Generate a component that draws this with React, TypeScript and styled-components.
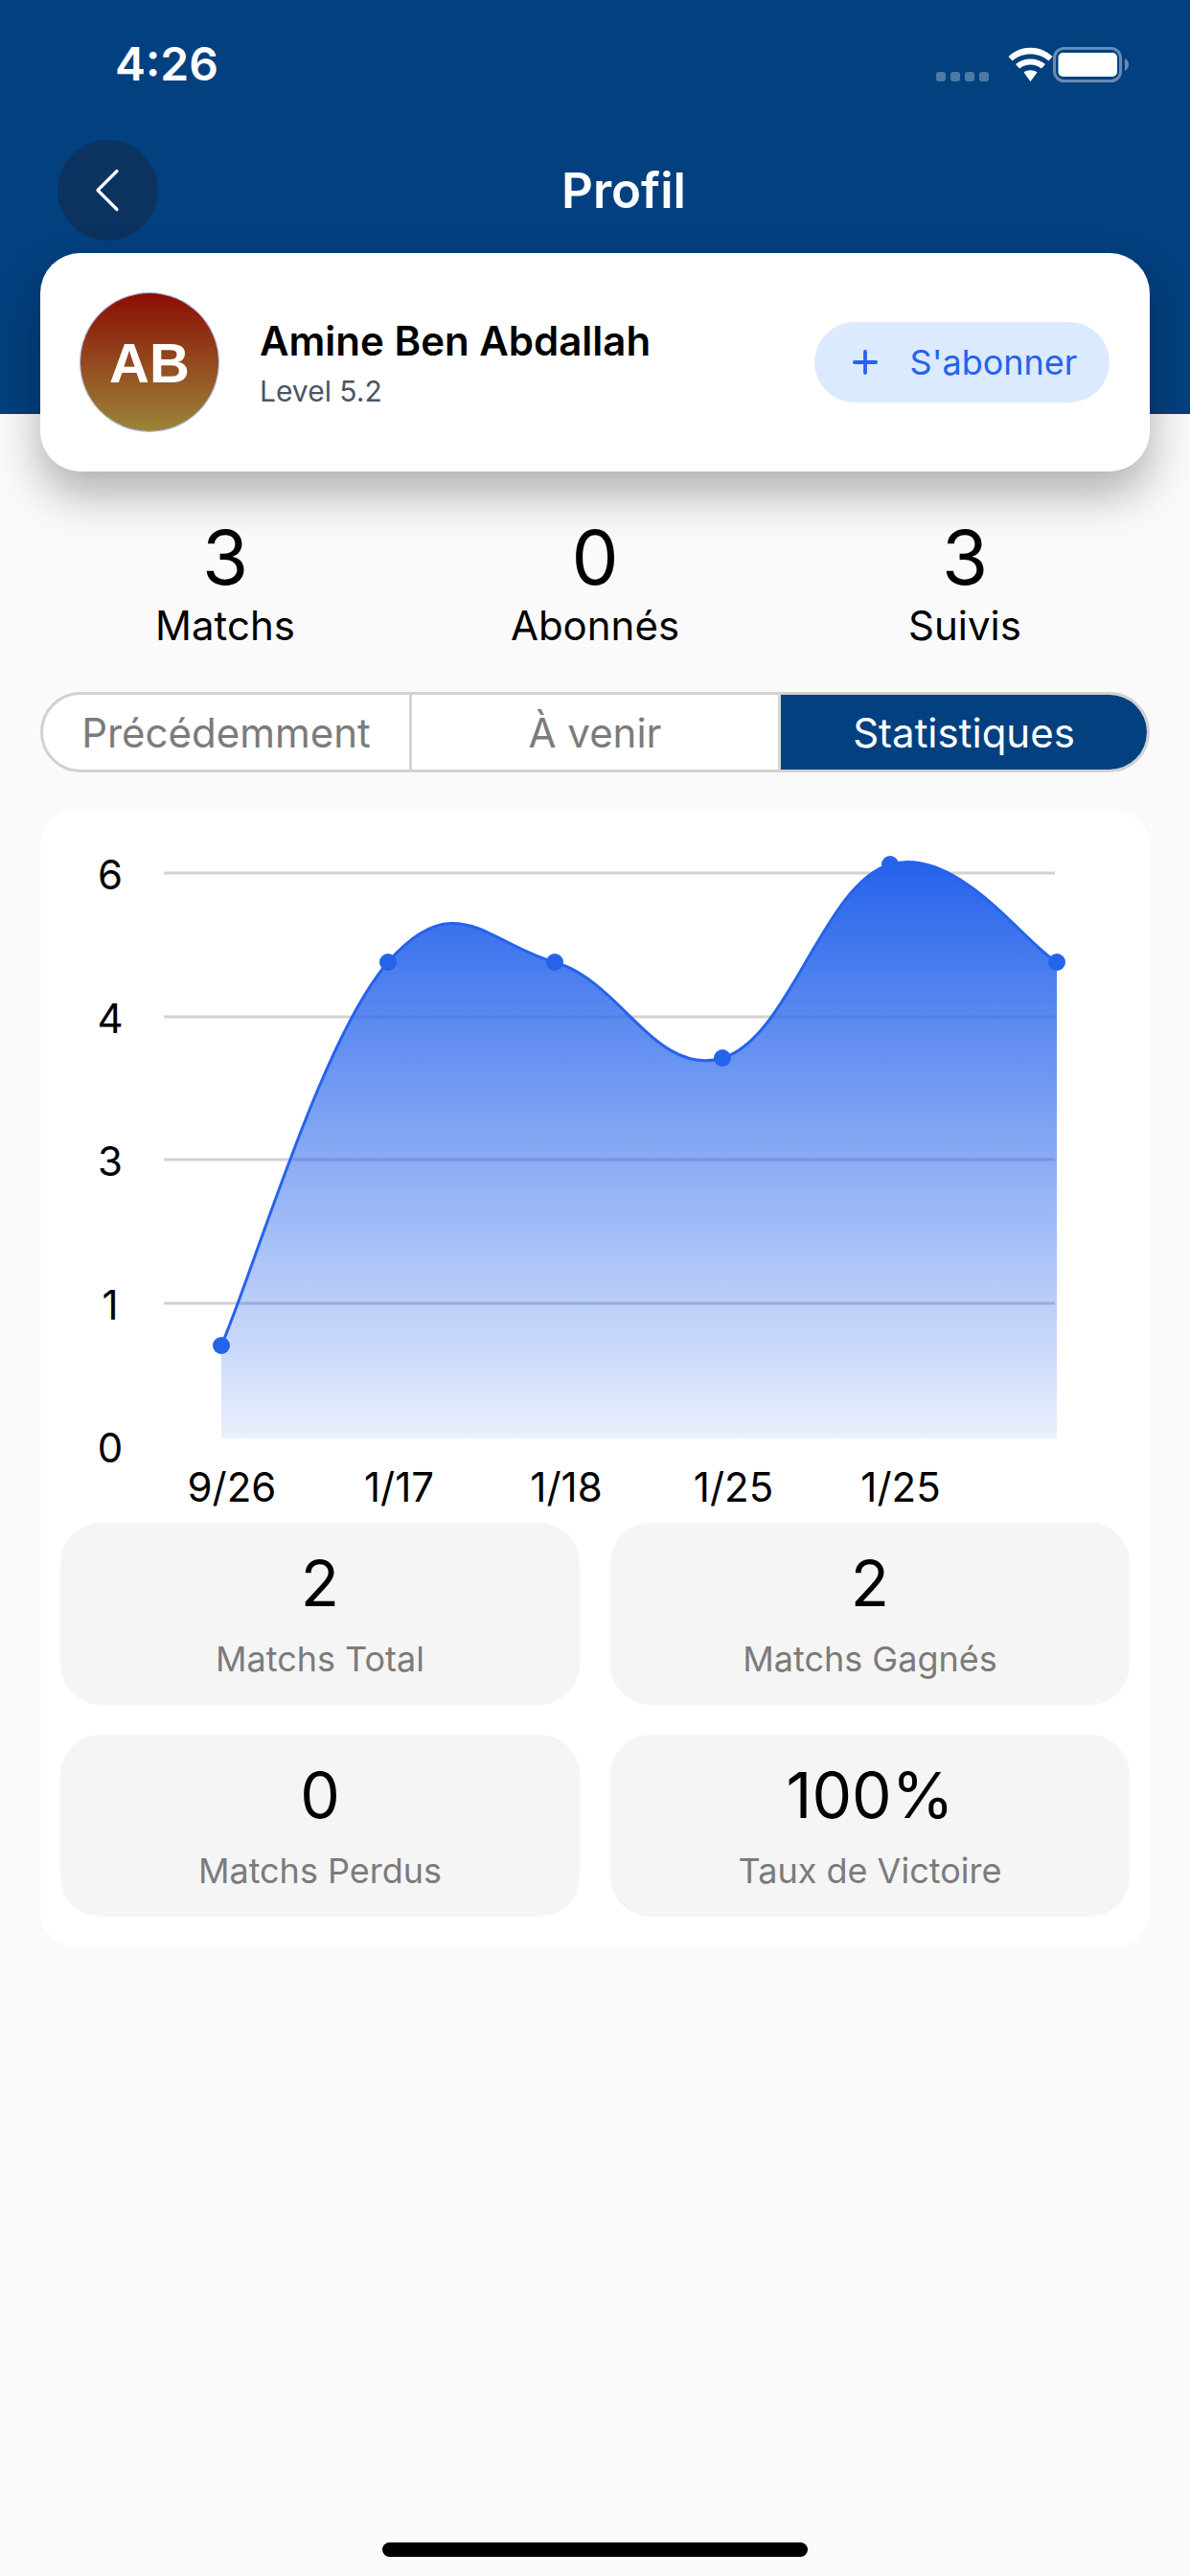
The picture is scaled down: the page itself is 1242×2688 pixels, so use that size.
import styled, { createGlobalStyle } from "styled-components";
import { Plus } from "lucide-react";

const NAVY = "#03407f";
const BLUE = "#2563eb";

const GlobalStyle = createGlobalStyle`
  html, body {
    margin: 0;
    padding: 0;
    background: #fafafa;
    font-family: Inter, "Liberation Sans", sans-serif;
  }
  * {
    box-sizing: border-box;
  }
`;

const followers = [
  { value: "3", label: "Matchs" },
  { value: "0", label: "Abonnés" },
  { value: "3", label: "Suivis" },
];

const tabs = ["Précédemment", "À venir", "Statistiques"];

const summary = [
  { value: "2", label: "Matchs Total" },
  { value: "2", label: "Matchs Gagnés" },
  { value: "0", label: "Matchs Perdus" },
  { value: "100%", label: "Taux de Victoire" },
];

// chart coordinates, relative to the white card
const CHART_W = 1158;
const CHART_H = 743;
const points = [
  [189, 558],
  [363, 158],
  [537, 158],
  [712, 258],
  [887, 56],
  [1061, 158],
];
const gridLines = [
  { y: 65, label: "6" },
  { y: 215, label: "4" },
  { y: 364, label: "3" },
  { y: 514, label: "1" },
];
const xLabels = ["9/26", "1/17", "1/18", "1/25", "1/25"];
const AREA_BOTTOM = 655;

function curvePath(pts: number[][], smoothing = 0.2) {
  let d = `M${pts[0][0]} ${pts[0][1]}`;
  for (let i = 0; i < pts.length - 1; i++) {
    const prev = pts[i - 1] ?? pts[i];
    const cur = pts[i];
    const next = pts[i + 1];
    const after = pts[i + 2] ?? next;
    const c1x = cur[0] + (next[0] - prev[0]) * smoothing;
    const c1y = cur[1] + (next[1] - prev[1]) * smoothing;
    const c2x = next[0] - (after[0] - cur[0]) * smoothing;
    const c2y = next[1] - (after[1] - cur[1]) * smoothing;
    d += ` C${c1x} ${c1y} ${c2x} ${c2y} ${next[0]} ${next[1]}`;
  }
  return d;
}

function WifiIcon() {
  return (
    <svg width="47" height="36" viewBox="0 0 47 36" fill="#fff">
      <path d="M0.5 10 C13 -2.5 34 -2.5 46.5 10 L42.5 14.5 C32 5 15 5 4.5 14.5 Z" />
      <path d="M8 18 C16 10.5 31 10.5 39 18 L35 22.5 C28 17 19 17 12 22.5 Z" />
      <path d="M16.5 26.5 C20 23.5 27 23.5 30.5 26.5 L23.5 36 Z" />
    </svg>
  );
}

function BatteryIcon() {
  return (
    <svg width="79" height="37" viewBox="0 0 79 37">
      <rect x="1.5" y="1.5" width="69" height="34" rx="10" fill="none" stroke="#fff" strokeOpacity="0.4" strokeWidth="3" />
      <rect x="5.5" y="6" width="61.5" height="25" rx="5" fill="#fff" />
      <path d="M75 12 C77.5 13.5 79 15.5 79 18.5 C79 21.5 77.5 23.5 75 25 Z" fill="#fff" fillOpacity="0.4" />
    </svg>
  );
}

function ProgressChart() {
  const line = curvePath(points);
  const last = points[points.length - 1];
  const area = `${line} L${last[0]} ${AREA_BOTTOM} L${points[0][0]} ${AREA_BOTTOM} Z`;

  return (
    <ChartSvg width={CHART_W} height={CHART_H} viewBox={`0 0 ${CHART_W} ${CHART_H}`}>
      <defs>
        <linearGradient id="areaFill" x1="0" y1="0" x2="0" y2="1">
          <stop offset="0%" stopColor={BLUE} stopOpacity="1" />
          <stop offset="100%" stopColor={BLUE} stopOpacity="0.1" />
        </linearGradient>
      </defs>
      {gridLines.map((g) => (
        <line key={g.y} x1="129" x2="1059" y1={g.y} y2={g.y} stroke="#d2d2d2" strokeWidth="3" />
      ))}
      <path d={area} fill="url(#areaFill)" />
      <path d={line} fill="none" stroke={BLUE} strokeWidth="3" />
      {points.map(([x, y]) => (
        <circle key={`${x}-${y}`} cx={x} cy={y} r="9" fill={BLUE} />
      ))}
      {gridLines.map((g) => (
        <AxisText key={g.y} x="73" y={g.y + 1} textAnchor="middle" dominantBaseline="central">
          {g.label}
        </AxisText>
      ))}
      <AxisText x="73" y="664" textAnchor="middle" dominantBaseline="central">
        0
      </AxisText>
      {xLabels.map((label, i) => (
        <AxisText key={i} x={200 + i * 174.5} y="705" textAnchor="middle" dominantBaseline="central">
          {label}
        </AxisText>
      ))}
    </ChartSvg>
  );
}

export default function App() {
  return (
    <Page>
      <GlobalStyle />
      <Header>
        <StatusBar>
          <Clock>4:26</Clock>
          <StatusIcons>
            <SignalDots>
              <i />
              <i />
              <i />
              <i />
            </SignalDots>
            <WifiIcon />
            <BatteryIcon />
          </StatusIcons>
        </StatusBar>
        <NavBar>
          <BackButton aria-label="Retour">
            <svg width="44" height="60" viewBox="0 0 44 60" fill="none">
              <path d="M31 9.5 L11 29.5 L31 49.5" stroke="#fff" strokeWidth="3.2" strokeLinecap="round" strokeLinejoin="round" />
            </svg>
          </BackButton>
          <Title>Profil</Title>
        </NavBar>
      </Header>

      <ProfileCard>
        <Avatar>AB</Avatar>
        <Identity>
          <Name>Amine Ben Abdallah</Name>
          <Level>Level 5.2</Level>
        </Identity>
        <SubscribeButton>
          <Plus size={38} strokeWidth={2.4} />
          S'abonner
        </SubscribeButton>
      </ProfileCard>

      <Followers>
        {followers.map((f) => (
          <Follower key={f.label}>
            <FollowerValue>{f.value}</FollowerValue>
            <FollowerLabel>{f.label}</FollowerLabel>
          </Follower>
        ))}
      </Followers>

      <Tabs>
        {tabs.map((tab, i) => (
          <Tab key={tab} $active={i === 2}>
            {tab}
          </Tab>
        ))}
      </Tabs>

      <StatsCard>
        <ProgressChart />
        <SummaryGrid>
          {summary.map((s) => (
            <SummaryTile key={s.label}>
              <SummaryValue>{s.value}</SummaryValue>
              <SummaryLabel>{s.label}</SummaryLabel>
            </SummaryTile>
          ))}
        </SummaryGrid>
      </StatsCard>

      <HomeIndicator />
    </Page>
  );
}

const Page = styled.div`
  width: 1242px;
  min-height: 2688px;
  display: flex;
  flex-direction: column;
  background: #fafafa;
`;

const Header = styled.header`
  height: 432px;
  background: ${NAVY};
  color: #fff;
`;

const StatusBar = styled.div`
  height: 146px;
  padding: 38px 64px 0 120px;
  display: flex;
  justify-content: space-between;
  align-items: flex-start;
`;

const Clock = styled.span`
  font-size: 48px;
  font-weight: 600;
  line-height: 58px;
`;

const StatusIcons = styled.div`
  display: flex;
  align-items: flex-start;
  margin-top: 11px;
`;

const SignalDots = styled.div`
  display: flex;
  gap: 5px;
  margin: 26px 20px 0 0;

  i {
    display: block;
    width: 10px;
    height: 10px;
    border-radius: 3px;
    background: rgba(255, 255, 255, 0.3);
  }
`;

const NavBar = styled.div`
  display: flex;
  align-items: center;
  padding-left: 60px;
  position: relative;
`;

const BackButton = styled.button`
  width: 105px;
  height: 105px;
  padding: 0;
  border: 0;
  border-radius: 50%;
  background: #0c3360;
  display: flex;
  align-items: center;
  justify-content: center;
`;

const Title = styled.h1`
  flex: 1;
  margin: 0 0 0 -165px;
  padding-left: 60px;
  font-size: 51px;
  font-weight: 600;
  line-height: 62px;
  text-align: center;
`;

const ProfileCard = styled.section`
  margin: -168px 42px 0;
  height: 228px;
  padding: 0 42px;
  border-radius: 42px;
  background: #fff;
  box-shadow: 0 24px 48px rgba(0, 0, 0, 0.3);
  display: flex;
  align-items: center;
  position: relative;
`;

const Avatar = styled.div`
  width: 144px;
  height: 144px;
  flex: none;
  border-radius: 50%;
  background: linear-gradient(180deg, #8b0d04 0%, #9c8539 100%);
  box-shadow: 0 0 0 1px rgba(90, 120, 220, 0.55);
  color: #fff;
  font-family: "Liberation Sans", Arial, sans-serif;
  font-size: 58px;
  font-weight: 700;
  display: flex;
  align-items: center;
  justify-content: center;
`;

const Identity = styled.div`
  flex: 1;
  margin-left: 43px;
`;

const Name = styled.div`
  font-size: 42px;
  font-weight: 600;
  line-height: 52px;
  color: #000;
`;

const Level = styled.div`
  margin-top: 7px;
  font-size: 30px;
  line-height: 38px;
  color: #4b5563;
`;

const SubscribeButton = styled.button`
  width: 308px;
  height: 84px;
  padding: 0;
  border: 0;
  border-radius: 42px;
  background: #dbeafe;
  color: ${BLUE};
  font-family: inherit;
  font-size: 36px;
  display: flex;
  align-items: center;
  justify-content: center;
  gap: 28px;
`;

const Followers = styled.section`
  margin: 45px 42px 0;
  display: grid;
  grid-template-columns: repeat(3, 1fr);
`;

const Follower = styled.div`
  text-align: center;
  color: #000;
`;

const FollowerValue = styled.div`
  font-size: 78px;
  line-height: 90px;
`;

const FollowerLabel = styled.div`
  margin-top: 1px;
  font-size: 42px;
  line-height: 50px;
`;

const Tabs = styled.nav`
  margin: 44px 42px 0;
  height: 84px;
  display: flex;
  border: 3px solid #d1d1d1;
  border-radius: 42px;
  overflow: hidden;
  background: #fff;
`;

const Tab = styled.div<{ $active?: boolean }>`
  flex: 1;
  display: flex;
  align-items: center;
  justify-content: center;
  font-size: 42px;
  color: ${(p) => (p.$active ? "#fff" : "#7b7b7b")};
  background: ${(p) => (p.$active ? NAVY : "transparent")};

  & + & {
    border-left: 3px solid #d1d5db;
  }
`;

const StatsCard = styled.section`
  margin: 40px 42px 0;
  padding-bottom: 31px;
  border-radius: 36px;
  background: #fff;
`;

const ChartSvg = styled.svg`
  display: block;
`;

const AxisText = styled.text`
  font-family: Inter, "Liberation Sans", sans-serif;
  font-size: 42px;
  fill: #000;
`;

const SummaryGrid = styled.div`
  padding: 0 21px;
  display: grid;
  grid-template-columns: 1fr 1fr;
  gap: 31px 32px;
`;

const SummaryTile = styled.div`
  height: 190px;
  padding-top: 28px;
  border-radius: 42px;
  background: #f5f5f5;
  text-align: center;
`;

const SummaryValue = styled.div`
  font-size: 66px;
  line-height: 70px;
  color: #000;
`;

const SummaryLabel = styled.div`
  margin-top: 21px;
  font-size: 36px;
  line-height: 46px;
  color: #7b7b7b;
`;

const HomeIndicator = styled.div`
  width: 444px;
  height: 15px;
  margin: auto auto 20px;
  border-radius: 8px;
  background: #000;
`;
